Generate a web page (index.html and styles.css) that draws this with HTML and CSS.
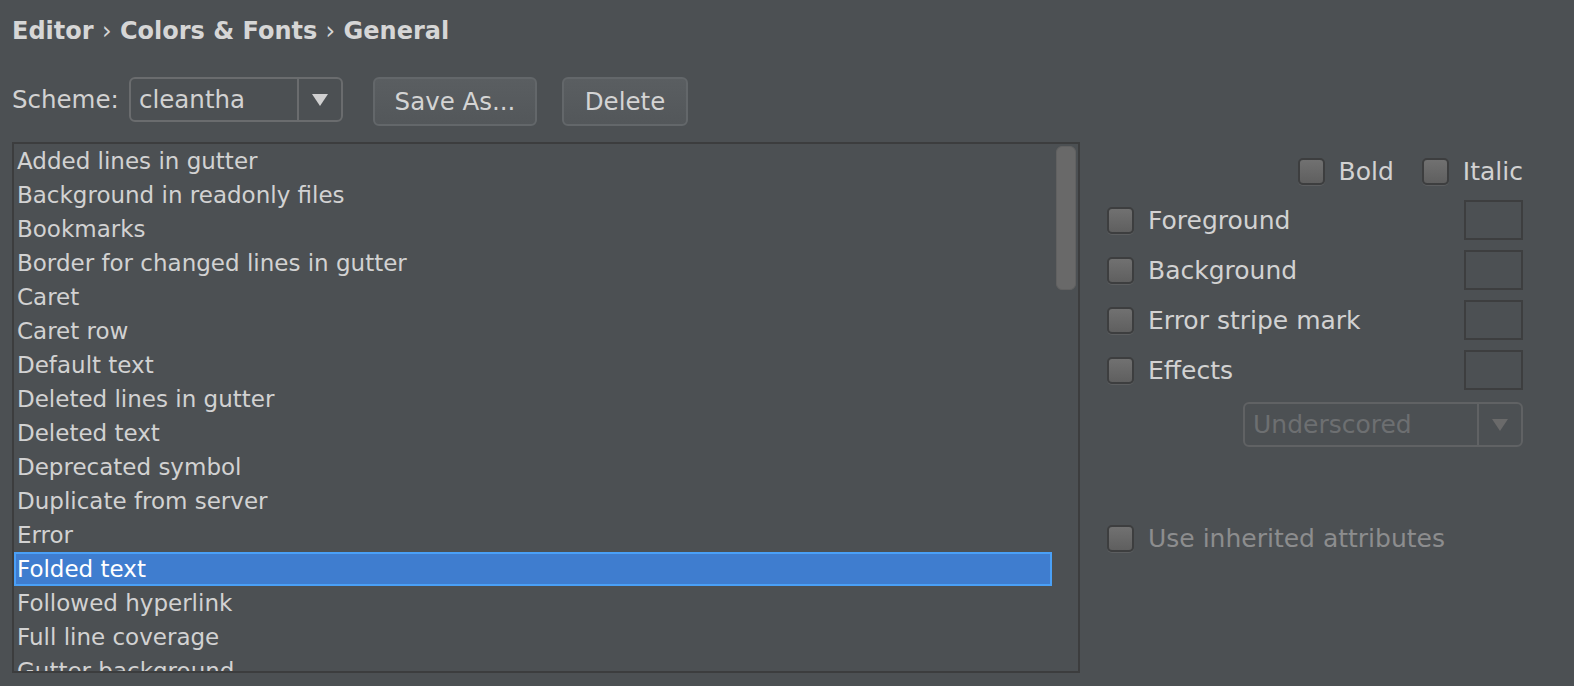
FILE: index.html
```html
<!DOCTYPE html>
<html>
<head>
<meta charset="utf-8">
<link rel="stylesheet" href="styles.css">
</head>
<body>
<div class="page">
  <div class="crumb">Editor <span class="sep">›</span> Colors &amp; Fonts <span class="sep">›</span> General</div>
  <div class="scheme-row">
    <span class="label">Scheme:</span>
    <div class="combo scheme-combo">
      <span class="combo-text">cleantha</span>
      <span class="combo-arrow"><svg width="16" height="12" viewBox="0 0 16 12"><path d="M0 0H16L8 12Z" fill="#d0d0d0"/></svg></span>
    </div>
    <button class="btn save">Save As...</button>
    <button class="btn del">Delete</button>
  </div>
  <div class="main">
    <div class="list">
      <div class="rows">
        <div class="row">Added lines in gutter</div>
        <div class="row">Background in readonly files</div>
        <div class="row">Bookmarks</div>
        <div class="row">Border for changed lines in gutter</div>
        <div class="row">Caret</div>
        <div class="row">Caret row</div>
        <div class="row">Default text</div>
        <div class="row">Deleted lines in gutter</div>
        <div class="row">Deleted text</div>
        <div class="row">Deprecated symbol</div>
        <div class="row">Duplicate from server</div>
        <div class="row">Error</div>
        <div class="row selected">Folded text</div>
        <div class="row">Followed hyperlink</div>
        <div class="row">Full line coverage</div>
        <div class="row">Gutter background</div>
      </div>
      <div class="track"><div class="thumb"></div></div>
    </div>
    <div class="panel">
      <div class="style-row">
        <span class="check"></span><span class="check-label">Bold</span>
        <span class="check italic-check"></span><span class="check-label">Italic</span>
      </div>
      <div class="attr-row">
        <span class="check"></span><span class="check-label grow">Foreground</span><span class="swatch"></span>
      </div>
      <div class="attr-row">
        <span class="check"></span><span class="check-label grow">Background</span><span class="swatch"></span>
      </div>
      <div class="attr-row">
        <span class="check"></span><span class="check-label grow">Error stripe mark</span><span class="swatch"></span>
      </div>
      <div class="attr-row">
        <span class="check"></span><span class="check-label grow">Effects</span><span class="swatch"></span>
      </div>
      <div class="effect-row">
        <div class="combo effect-combo">
          <span class="combo-text">Underscored</span>
          <span class="combo-arrow"><svg width="16" height="12" viewBox="0 0 16 12"><path d="M0 0H16L8 12Z" fill="#6a6a6a"/></svg></span>
        </div>
      </div>
      <div class="inherit-row">
        <span class="check"></span><span class="check-label disabled">Use inherited attributes</span>
      </div>
    </div>
  </div>
</div>
</body>
</html>
```
FILE: styles.css
```css
* { box-sizing: border-box; }
html, body { margin: 0; padding: 0; }
body {
  background: #4c5053;
  color: #d2d2d2;
  font-family: "DejaVu Sans", "Liberation Sans", sans-serif;
  font-size: 23px;
  width: 1574px;
  height: 686px;
  overflow: hidden;
}
.page { padding: 0 51px 0 12px; }

.crumb {
  height: 62px;
  line-height: 62px;
  font-size: 24px;
  font-weight: bold;
  color: #d6d6d6;
  white-space: nowrap;
}
.crumb .sep { font-weight: normal; }

.scheme-row {
  margin-top: 15px;
  height: 49px;
  display: flex;
  align-items: flex-start;
  font-size: 24.5px;
}
.label { line-height: 45px; width: 117px; white-space: nowrap; }

.combo {
  display: flex;
  height: 45px;
  border: 2px solid #6a6c6e;
  border-radius: 6px;
  align-items: stretch;
}
.combo-text { flex: 1; padding-left: 8px; line-height: 41px; white-space: nowrap; }
.combo-arrow {
  width: 44px;
  border-left: 2px solid #6a6c6e;
  display: flex;
  align-items: center;
  justify-content: center;
}
.scheme-combo { width: 214px; }

.btn {
  height: 49px;
  border: 2px solid #63676a;
  border-radius: 6px;
  background: linear-gradient(#5a5e61, #53575a);
  color: #d4d4d4;
  font: inherit;
  padding: 0;
}
.save { width: 164px; margin-left: 30px; }
.del { width: 126px; margin-left: 25px; }

.main {
  margin-top: 16px;
  display: flex;
  align-items: flex-start;
}
.list {
  width: 1068px;
  height: 531px;
  border: 2px solid #3c3d3e;
  display: flex;
  overflow: hidden;
}
.rows { width: 1038px; }
.row {
  height: 34px;
  line-height: 30px;
  border: 2px solid transparent;
  padding-left: 1px;
  white-space: nowrap;
  color: #d2d2d2;
}
.row.selected {
  background: #3f7dcf;
  border-color: #4aa0f7;
  color: #ffffff;
}
.track { width: 26px; padding: 2px 2px 0 4px; }
.thumb {
  width: 20px;
  height: 144px;
  background: #696969;
  border: 1px solid #616161;
  border-radius: 6px;
}

.panel {
  width: 416px;
  margin-left: 27px;
  font-size: 25px;
}
.check {
  width: 27px;
  height: 27px;
  flex: none;
  border: 2px solid #3d3e3f;
  border-radius: 5px;
  background: linear-gradient(#717171, #5f5f5f);
  box-shadow: 0 1px 0 #5c5e60;
}
.check-label { margin-left: 14px; white-space: nowrap; }
.check-label.grow { flex: 1; }
.check-label.disabled { color: #8c8d8e; }

.style-row {
  margin-top: 16px;
  height: 27px;
  display: flex;
  align-items: center;
  justify-content: flex-end;
}
.italic-check { margin-left: 28px; }

.attr-row {
  height: 40px;
  margin-top: 10px;
  display: flex;
  align-items: center;
}
.style-row + .attr-row { margin-top: 15px; }
.swatch {
  width: 59px;
  height: 40px;
  border: 2px solid #3d3e3f;
}

.effect-row {
  margin-top: 12px;
  display: flex;
  justify-content: flex-end;
}
.effect-combo {
  width: 280px;
  border-color: #606264;
  color: #6d6f71;
}
.effect-combo .combo-arrow { border-left-color: #606264; }

.inherit-row {
  margin-top: 78px;
  height: 27px;
  display: flex;
  align-items: center;
}
```
